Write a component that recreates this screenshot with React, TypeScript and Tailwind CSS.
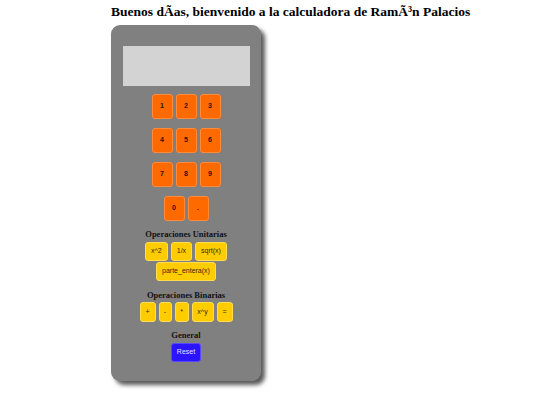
import React from "react";

const numBtn =
  "w-[21px] h-[25px] rounded-[3px] bg-[#ff6a00] border border-[#ff8a3a] text-[7px] font-bold text-[#2a1200] flex items-center justify-center";
const yBtn =
  "h-[19px] px-[5px] rounded-[3px] bg-[#ffcc00] border border-[#ffdc50] text-[7px] text-[#332a00] flex items-center justify-center";
const bBtn =
  "h-[20px] rounded-[3px] bg-[#ffcc00] border border-[#ffdc50] text-[7px] text-[#332a00] flex items-center justify-center";
const serif = { fontFamily: "'Liberation Serif', 'Times New Roman', serif" };

export default function App() {
  const rows = [["1", "2", "3"], ["4", "5", "6"], ["7", "8", "9"], ["0", "."]];
  return (
    <div className="w-[540px] h-[405px] bg-white relative" style={{ fontFamily: "'Liberation Sans', Arial, sans-serif" }}>
      <h1
        className="absolute left-[111px] top-[3px] text-[13.5px] font-bold text-black whitespace-nowrap leading-[17px]"
        style={serif}
      >
        Buenos dÃ{"\u00AD"}as, bienvenido a la calculadora de RamÃ³n Palacios
      </h1>
      <div className="absolute left-[111px] top-[25px] w-[150px] h-[356px] bg-[#808080] rounded-[9px] shadow-[4px_4px_4px_rgba(0,0,0,0.65)] flex flex-col items-center pt-[21px]">
        <div className="w-[127px] h-[40px] bg-[#d3d3d3]" />
        <div className="mt-[8px] flex flex-col gap-[9px] items-center">
          {rows.map((r, i) => (
            <div key={i} className="flex gap-[3px]">
              {r.map((n) => (
                <div key={n} className={numBtn}>{n}</div>
              ))}
            </div>
          ))}
        </div>
        <div className="mt-[7px] text-[8.5px] font-bold leading-[12px] text-[#111]" style={serif}>
          Operaciones Unitarias
        </div>
        <div className="mt-[2px] w-[127px] flex flex-wrap justify-center gap-x-[3px] gap-y-[1px]">
          <div className={yBtn}>x^2</div>
          <div className={yBtn}>1/x</div>
          <div className={yBtn}>sqrt(x)</div>
          <div className={yBtn}>parte_entera(x)</div>
        </div>
        <div className="mt-[8px] text-[8.5px] font-bold leading-[12px] text-[#111]" style={serif}>
          Operaciones Binarias
        </div>
        <div className="mt-[1px] flex gap-[3px]">
          <div className={bBtn + " w-[16px]"}>+</div>
          <div className={bBtn + " w-[13px]"}>-</div>
          <div className={bBtn + " w-[14px]"}>*</div>
          <div className={bBtn + " w-[22px]"}>x^y</div>
          <div className={bBtn + " w-[16px]"}>=</div>
        </div>
        <div className="mt-[7px] text-[8.5px] font-bold leading-[12px] text-[#111]" style={serif}>
          General
        </div>
        <div className="mt-[2px] w-[30px] h-[19px] rounded-[3px] bg-[#2b14ff] border border-[#5a48ff] text-[7px] text-[#e0e0ff] flex items-center justify-center">
          Reset
        </div>
      </div>
    </div>
  );
}
